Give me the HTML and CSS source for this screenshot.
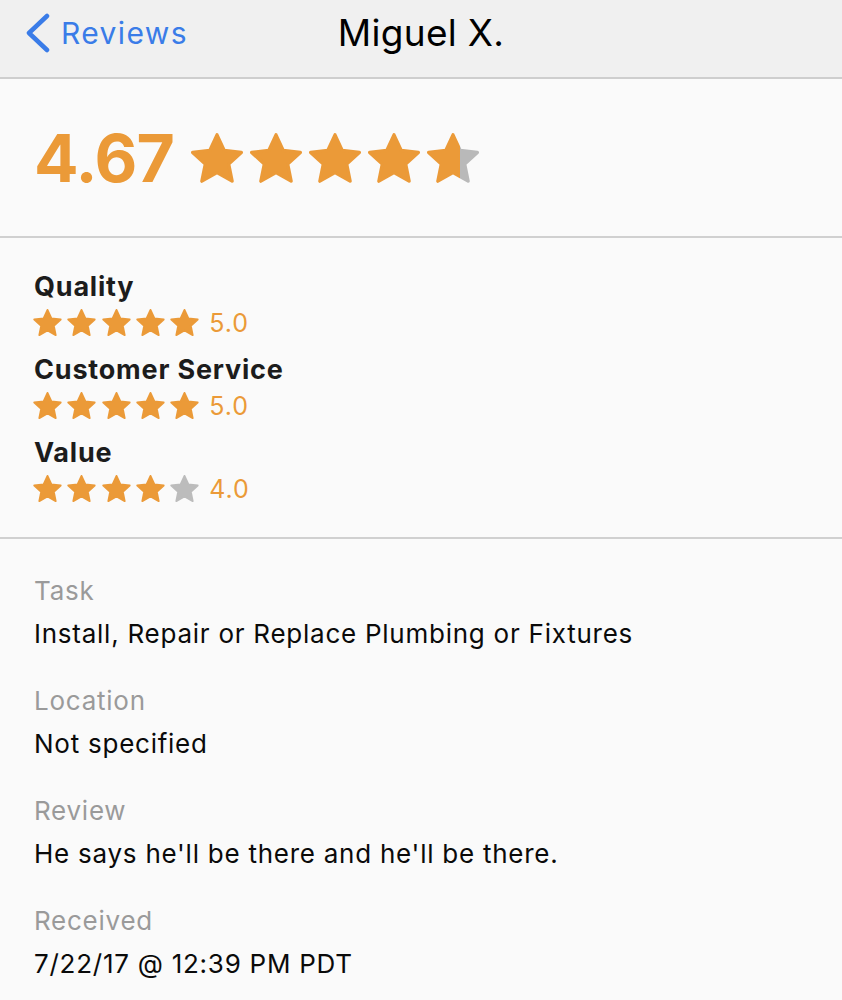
FILE: index.html
```html
<!DOCTYPE html>
<html lang="en">
<head>
<meta charset="utf-8">
<title>Miguel X.</title>
<link rel="stylesheet" href="styles.css">
</head>
<body>
<svg class="defs" width="0" height="0" aria-hidden="true">
  <defs>
    <path id="star" d="M12 1.6 L15.05 8.2 L22.3 9.05 L16.95 14 L18.4 21.2 L12 17.6 L5.6 21.2 L7.05 14 L1.7 9.05 L8.95 8.2 Z"/>
    <linearGradient id="part67" x1="0" x2="1" y1="0" y2="0">
      <stop offset="0.65" stop-color="#eb9a38"/>
      <stop offset="0.65" stop-color="#b9b9b9"/>
    </linearGradient>
  </defs>
</svg>

<header class="nav">
  <a class="back" href="#">
    <svg class="chevron" viewBox="0 0 26 40" width="26" height="40"><path d="M22 3 L4 20 L22 37"/></svg>
    <span>Reviews</span>
  </a>
  <h1 class="title">Miguel X.</h1>
  <div></div>
</header>

<main>
  <section class="overall">
    <span class="score">4.67</span>
    <div class="stars big">
      <svg viewBox="1 0.9 22 21"><use href="#star" class="on"/></svg>
      <svg viewBox="1 0.9 22 21"><use href="#star" class="on"/></svg>
      <svg viewBox="1 0.9 22 21"><use href="#star" class="on"/></svg>
      <svg viewBox="1 0.9 22 21"><use href="#star" class="on"/></svg>
      <svg viewBox="1 0.9 22 21"><use href="#star" fill="url(#part67)" stroke="url(#part67)" class="part"/></svg>
    </div>
  </section>

  <section class="categories">
    <div class="cat">
      <div class="cat-name">Quality</div>
      <div class="cat-row">
        <div class="stars small">
          <svg viewBox="1 0.9 22 21"><use href="#star" class="on"/></svg>
          <svg viewBox="1 0.9 22 21"><use href="#star" class="on"/></svg>
          <svg viewBox="1 0.9 22 21"><use href="#star" class="on"/></svg>
          <svg viewBox="1 0.9 22 21"><use href="#star" class="on"/></svg>
          <svg viewBox="1 0.9 22 21"><use href="#star" class="on"/></svg>
        </div>
        <span class="cat-score">5.0</span>
      </div>
    </div>
    <div class="cat">
      <div class="cat-name">Customer Service</div>
      <div class="cat-row">
        <div class="stars small">
          <svg viewBox="1 0.9 22 21"><use href="#star" class="on"/></svg>
          <svg viewBox="1 0.9 22 21"><use href="#star" class="on"/></svg>
          <svg viewBox="1 0.9 22 21"><use href="#star" class="on"/></svg>
          <svg viewBox="1 0.9 22 21"><use href="#star" class="on"/></svg>
          <svg viewBox="1 0.9 22 21"><use href="#star" class="on"/></svg>
        </div>
        <span class="cat-score">5.0</span>
      </div>
    </div>
    <div class="cat">
      <div class="cat-name">Value</div>
      <div class="cat-row">
        <div class="stars small">
          <svg viewBox="1 0.9 22 21"><use href="#star" class="on"/></svg>
          <svg viewBox="1 0.9 22 21"><use href="#star" class="on"/></svg>
          <svg viewBox="1 0.9 22 21"><use href="#star" class="on"/></svg>
          <svg viewBox="1 0.9 22 21"><use href="#star" class="on"/></svg>
          <svg viewBox="1 0.9 22 21"><use href="#star" class="off"/></svg>
        </div>
        <span class="cat-score">4.0</span>
      </div>
    </div>
  </section>

  <section class="details">
    <div class="field">
      <div class="label">Task</div>
      <div class="value">Install, Repair or Replace Plumbing or Fixtures</div>
    </div>
    <div class="field">
      <div class="label">Location</div>
      <div class="value">Not specified</div>
    </div>
    <div class="field">
      <div class="label">Review</div>
      <div class="value">He says he'll be there and he'll be there.</div>
    </div>
    <div class="field">
      <div class="label">Received</div>
      <div class="value">7/22/17 @ 12:39 PM PDT</div>
    </div>
  </section>
</main>
</body>
</html>
```

FILE: styles.css
```css
* { box-sizing: border-box; }

html, body {
  margin: 0;
  padding: 0;
  background: #fafafa;
  font-family: "Inter", "Roboto", "Liberation Sans", sans-serif;
  color: #111;
}

.defs { position: absolute; width: 0; height: 0; overflow: hidden; }

.nav {
  display: grid;
  grid-template-columns: 1fr auto 1fr;
  align-items: center;
  height: 79px;
  padding-bottom: 12px;
  background: #f0f0f0;
  border-bottom: 2px solid #cecece;
}

.back {
  display: flex;
  align-items: center;
  gap: 10px;
  padding-left: 25px;
  color: #3a7ce8;
  text-decoration: none;
  font-size: 30px;
  letter-spacing: 1.4px;
}

.chevron {
  fill: none;
  stroke: #3a7ce8;
  stroke-width: 4.5;
  stroke-linecap: round;
  stroke-linejoin: round;
}

.title {
  margin: 0;
  font-size: 37px;
  font-weight: 400;
  color: #000;
  letter-spacing: 0.3px;
}

.overall {
  display: flex;
  align-items: center;
  gap: 17px;
  height: 159px;
  padding: 0 34px;
  border-bottom: 2px solid #d0d0d0;
}

.score {
  font-size: 66px;
  font-weight: 700;
  color: #eb9a38;
  letter-spacing: -1px;
  line-height: 1;
}

.stars { display: flex; }

.stars svg { display: block; }

.stars.big { gap: 7px; }
.stars.big svg { width: 52px; height: 50px; }

.stars.small { gap: 5.3px; }
.stars.small svg { width: 29px; height: 27px; }

.stars use {
  stroke-width: 1.4;
  stroke-linejoin: round;
}

.stars .on { fill: #eb9a38; stroke: #eb9a38; }
.stars .off { fill: #bcbcbc; stroke: #bcbcbc; }

.categories {
  display: flex;
  flex-direction: column;
  gap: 12px;
  padding: 31px 34px 31px 33px;
  border-bottom: 2px solid #d0d0d0;
}

.cat-name {
  font-size: 27px;
  font-weight: 700;
  line-height: 36px;
  color: #1c1c1c;
  letter-spacing: 0.8px;
  padding-left: 1px;
}

.cat-row {
  display: flex;
  align-items: center;
  gap: 10px;
  height: 35px;
}

.cat-score {
  font-size: 25px;
  color: #eb9a38;
  letter-spacing: 1px;
}

.details {
  display: flex;
  flex-direction: column;
  gap: 24px;
  padding: 30px 34px;
}

.label {
  font-size: 26px;
  line-height: 43px;
  color: #9a9a9a;
  letter-spacing: 0.75px;
}

.value {
  font-size: 26px;
  line-height: 43px;
  color: #0a0a0a;
  letter-spacing: 0.75px;
}
```
